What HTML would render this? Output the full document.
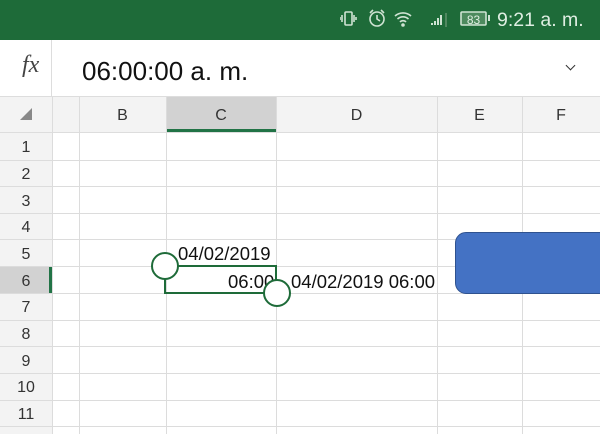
<!DOCTYPE html><html><head><style>
body{margin:0;width:600px;height:434px;overflow:hidden;position:relative;font-family:"Liberation Sans",sans-serif;background:#fff}
div{position:absolute;box-sizing:border-box}
.h{height:1px;left:0;width:600px;background:#dcdcdc}
.v{width:1px;background:#dcdcdc}
.rl{left:0;width:52px;text-align:center;font-size:16px;color:#333}
.cl{top:97px;height:35px;line-height:37px;text-align:center;font-size:16px;color:#333}
.t{font-size:18.5px;color:#111;white-space:nowrap;line-height:20px}
</style></head><body>
<div style="left:0;top:0;width:600px;height:40px;background:#1e6b39"></div>
<svg style="position:absolute;left:340px;top:8px" width="160" height="24" viewBox="0 0 160 24" fill="none" stroke="#cfe3d3" stroke-width="1.6">
<rect x="5" y="4" width="7" height="13" rx="1"/><path d="M2 7v7M14 7v7M0 9v3M16 9v3"/>
<circle cx="37" cy="11" r="7"/><path d="M37 7v4l3 2M30 5l3-3M44 5l-3-3"/>
<path d="M55 8a12 12 0 0 1 16 0M57.5 11a8 8 0 0 1 11 0M60 14a4 4 0 0 1 6 0"/><circle cx="63" cy="17" r="1" fill="#cfe3d3"/>
<path d="M92 17v-2M95 17v-4M98 17v-7M101 17v-10" stroke-width="2"/><path d="M106 5v14" stroke="#5d8f6b"/>
<rect x="121" y="4" width="25" height="13" rx="1" fill="#4d8a5e"/>
</svg>
<div style="left:461px;top:13px;font-size:12px;color:#dfeee2;width:25px;text-align:center">83</div>
<div style="left:488px;top:15px;width:2px;height:6px;background:#cfe3d3"></div>
<div style="left:497px;top:9px;color:#dfeee2;font-size:19.5px;white-space:nowrap">9:21 a. m.</div>
<div style="left:51px;top:40px;width:1px;height:57px;background:#ddd"></div>
<div style="left:22px;top:52px;font-family:'Liberation Serif',serif;font-style:italic;font-size:24px;color:#444">fx</div>
<div style="left:82px;top:56px;font-size:26px;color:#111">06:00:00 a. m.</div>
<div style="left:567px;top:62px;width:7px;height:7px;border-right:1.5px solid #333;border-bottom:1.5px solid #333;transform:rotate(45deg)"></div>
<div style="left:0;top:96px;width:600px;height:37px;background:#f3f3f3;border-top:1px solid #ddd;border-bottom:1px solid #ddd"></div>
<div style="left:0;top:133px;width:52px;height:301px;background:#f3f3f3"></div>
<div style="left:166px;top:97px;width:110px;height:35px;background:#d2d2d2;border-bottom:3px solid #217346"></div>
<div style="left:0;top:267px;width:52px;height:26px;background:#d2d2d2;border-right:3px solid #217346"></div>
<div style="left:20px;top:108px;width:0;height:0;border-left:12px solid transparent;border-bottom:12px solid #888"></div>
<div class="cl" style="left:79px;width:87px">B</div>
<div class="cl" style="left:166px;width:110px">C</div>
<div class="cl" style="left:276px;width:161px">D</div>
<div class="cl" style="left:437px;width:85px">E</div>
<div class="cl" style="left:522px;width:78px">F</div>
<div class="v" style="left:52px;top:97px;height:337px"></div>
<div class="v" style="left:79px;top:97px;height:337px"></div>
<div class="v" style="left:166px;top:97px;height:337px"></div>
<div class="v" style="left:276px;top:97px;height:337px"></div>
<div class="v" style="left:437px;top:97px;height:337px"></div>
<div class="v" style="left:522px;top:97px;height:337px"></div>
<div class="h" style="top:160px"></div><div class="h" style="top:186px"></div><div class="h" style="top:213px"></div><div class="h" style="top:239px"></div><div class="h" style="top:266px"></div><div class="h" style="top:293px"></div><div class="h" style="top:320px"></div><div class="h" style="top:346px"></div><div class="h" style="top:373px"></div><div class="h" style="top:400px"></div><div class="h" style="top:426px"></div>
<div class="rl" style="top:139px">1</div><div class="rl" style="top:166px">2</div><div class="rl" style="top:193px">3</div><div class="rl" style="top:219px">4</div><div class="rl" style="top:246px">5</div><div class="rl" style="top:273px">6</div><div class="rl" style="top:299px">7</div><div class="rl" style="top:326px">8</div><div class="rl" style="top:353px">9</div><div class="rl" style="top:379px">10</div><div class="rl" style="top:406px">11</div>
<div class="t" style="left:178px;top:244px">04/02/2019</div>
<div style="left:164px;top:265px;width:113px;height:29px;border:2.5px solid #1e6b39"></div>
<div class="t" style="left:228px;top:272px;width:46px;overflow:hidden">06:00</div>
<div class="t" style="left:291px;top:272px">04/02/2019 06:00</div>
<div style="left:151px;top:252px;width:28px;height:28px;border-radius:50%;border:2.5px solid #1e6b39;background:#fff"></div>
<div style="left:263px;top:279px;width:28px;height:28px;border-radius:50%;border:2.5px solid #1e6b39;background:#fff"></div>
<div style="left:455px;top:232px;width:160px;height:62px;border-radius:11px;background:#4472c4;border:1px solid #2f528f"></div>
</body></html>
